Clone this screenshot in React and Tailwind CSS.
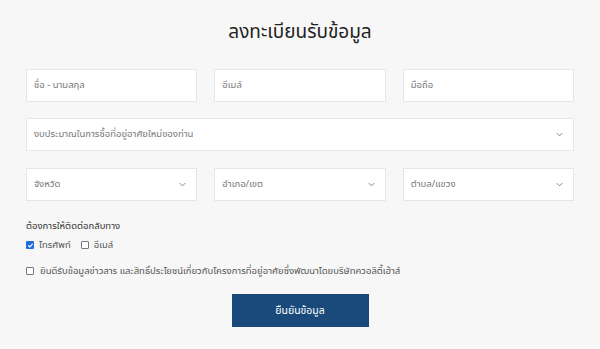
import React from "react";

function Chevron() {
  return (
    <svg width="9" height="9" viewBox="0 0 10 10" className="shrink-0">
      <path d="M2 3.5 L5 6.5 L8 3.5" fill="none" stroke="#777" strokeWidth="1" />
    </svg>
  );
}

function Field({ text, select, className = "" }) {
  return (
    <div
      className={
        "h-[33px] bg-white border border-[#e6e6e6] flex items-center justify-between pl-[7px] pr-[9px] text-[9.5px] text-[#777] " +
        className
      }
    >
      <span>{text}</span>
      {select && <Chevron />}
    </div>
  );
}

function Box({ checked }) {
  return checked ? (
    <span className="block shrink-0 w-[8px] h-[8px] rounded-[1px] bg-[#1e6fd9] flex items-center justify-center">
      <svg width="7" height="7" viewBox="0 0 8 8">
        <path d="M1.5 4 L3.2 5.7 L6.5 2.2" fill="none" stroke="#fff" strokeWidth="1.3" />
      </svg>
    </span>
  ) : (
    <span className="block shrink-0 w-[8px] h-[8px] rounded-[1px] border border-[#777] bg-white" />
  );
}

export default function App() {
  return (
    <div
      className="w-[600px] h-[349px] bg-[#f7f7f7] text-[#333] overflow-hidden"
      style={{ fontFamily: '"Noto Sans", "Noto Sans Thai", sans-serif' }}
    >
      <div className="px-[26px] pt-[17px]">
        <h1 className="text-center text-[19px] leading-[28px] text-[#222] font-normal">
          ลงทะเบียนรับข้อมูล
        </h1>
        <div className="mt-[24px] grid grid-cols-3 gap-x-[17px]">
          <Field text="ชื่อ - นามสกุล" />
          <Field text="อีเมล์" />
          <Field text="มือถือ" />
        </div>
        <Field className="mt-[16px]" text="งบประมาณในการซื้อที่อยู่อาศัยใหม่ของท่าน" select />
        <div className="mt-[17px] grid grid-cols-3 gap-x-[17px]">
          <Field text="จังหวัด" select />
          <Field text="อำเภอ/เขต" select />
          <Field text="ตำบล/แขวง" select />
        </div>
        <div className="mt-[18px] text-[9.5px] leading-[14px] text-[#333]">ต้องการให้ติดต่อกลับทาง</div>
        <div className="mt-[5px] flex items-center text-[9.5px] leading-[14px] text-[#555]">
          <Box checked />
          <span className="ml-[5px]">โทรศัพท์</span>
          <span className="ml-[10px]"><Box /></span>
          <span className="ml-[5px]">อีเมล์</span>
        </div>
        <div className="mt-[12px] flex items-center text-[9.5px] leading-[14px] text-[#555]">
          <Box />
          <span className="ml-[6px]">
            ยินดีรับข้อมูลข่าวสาร และสิทธิ์ประโยชน์เกี่ยวกับโครงการที่อยู่อาศัยซึ่งพัฒนาโดยบริษัทควอลิตี้เฮ้าส์
          </span>
        </div>
        <div className="mt-[16px] flex justify-center">
          <button className="w-[137px] h-[33px] bg-[#1a4a7c] text-white text-[10.5px]">
            ยืนยันข้อมูล
          </button>
        </div>
      </div>
    </div>
  );
}
